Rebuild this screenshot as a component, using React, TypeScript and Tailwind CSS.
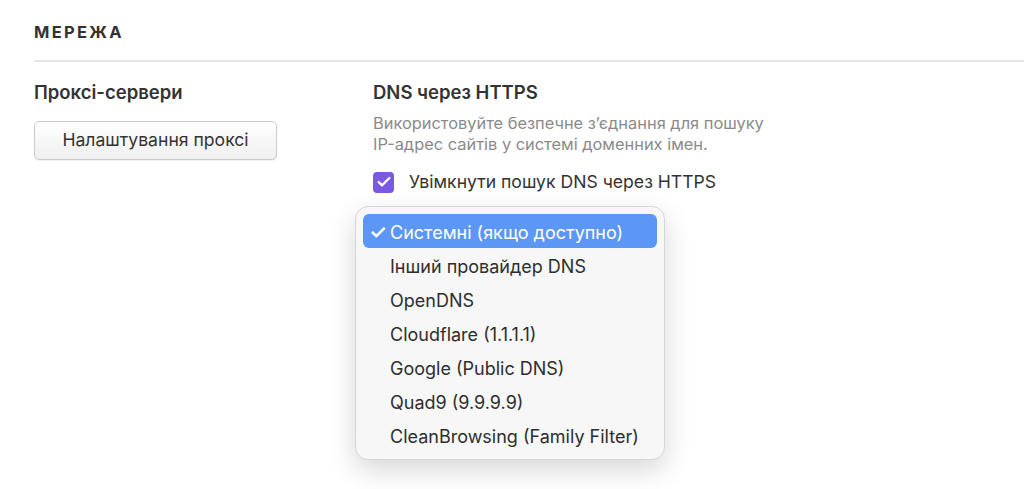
import { Check } from 'lucide-react';

const providers = [
  'Системні (якщо доступно)',
  'Інший провайдер DNS',
  'OpenDNS',
  'Cloudflare (1.1.1.1)',
  'Google (Public DNS)',
  'Quad9 (9.9.9.9)',
  'CleanBrowsing (Family Filter)',
];

export default function App() {
  return (
    <main className="min-h-screen bg-white font-['Inter','Liberation_Sans',sans-serif] text-[#333]">
      <div className="pl-[34px]">
        <h2 className="h-[62px] border-b-2 border-[#e6e6e6] pt-[21px] text-[16.5px] font-bold leading-[22px] tracking-[0.14em]">
          МЕРЕЖА
        </h2>
        <div className="flex pt-[19px]">
          <section className="w-[339px]">
            <h3 className="text-[18.5px] font-semibold leading-[22px]">Проксі-сервери</h3>
            <button className="mt-[18px] h-[39px] w-[243px] rounded-[5px] border border-[#cacaca] bg-gradient-to-b from-white to-[#efefef] text-[17.6px] text-[#333] shadow-[0_1px_1px_rgba(0,0,0,0.06)]">
              Налаштування проксі
            </button>
          </section>
          <section className="relative">
            <h3 className="text-[18.5px] font-semibold leading-[22px]">DNS через HTTPS</h3>
            <p className="mt-[10px] text-[16.4px] leading-[21px] text-[#8a8a8a]">
              Використовуйте безпечне з’єднання для пошуку
              <br />
              IP-адрес сайтів у системі доменних імен.
            </p>
            <label className="mt-[16px] flex items-center gap-[15px] text-[17.6px] leading-[22px]">
              <span className="flex h-[21px] w-[21px] items-center justify-center rounded-[4px] bg-[#7b5ae2]">
                <Check className="h-[16px] w-[16px] text-white" strokeWidth={3.5} />
              </span>
              Увімкнути пошук DNS через HTTPS
            </label>

            <ul className="absolute left-[-18px] top-[125px] w-[310px] rounded-[13px] border border-[#d6d6d6] bg-[#f7f7f7] p-[7px] shadow-[0_10px_28px_rgba(0,0,0,0.16)]">
              {providers.map((name, i) => (
                <li
                  key={name}
                  className={
                    i === 0
                      ? 'flex h-[34px] items-center rounded-[6px] bg-[#5d97f6] pl-[6px] pt-[2px] text-[18px] text-white'
                      : 'flex h-[34px] items-center pl-[6px] pt-[2px] text-[18px] text-[#2e2e2e]'
                  }
                >
                  <span className="w-[21px] text-[20px] font-semibold">{i === 0 ? '✓' : ''}</span>
                  {name}
                </li>
              ))}
            </ul>
          </section>
        </div>
      </div>
    </main>
  );
}
